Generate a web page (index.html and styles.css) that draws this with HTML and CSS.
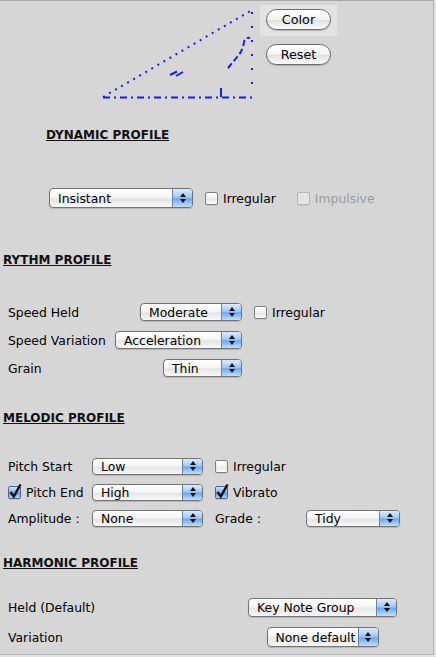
FILE: index.html
```html
<!DOCTYPE html>
<html>
<head>
<meta charset="utf-8">
<link rel="stylesheet" href="styles.css">
</head>
<body>
<div class="panel">
  <div class="top">
    <svg class="sketch" width="260" height="127" viewBox="0 1 260 127">
      <g fill="none" stroke="#1c1cf2" stroke-width="2">
        <line x1="103" y1="97" x2="252" y2="10" stroke-dasharray="2 5"/>
        <line x1="252" y1="12" x2="252" y2="96" stroke-dasharray="2 12"/>
        <line x1="103" y1="97.5" x2="252" y2="97.5" stroke-dasharray="7 4 2 4"/>
        <line x1="221" y1="88" x2="221" y2="97"/>
        <path d="M228 68 L238 56 Q243 50 244 42 Q245 37 250 38" stroke-dasharray="6 3"/>
        <line x1="170" y1="75" x2="177" y2="71.5"/>
        <line x1="176" y1="76" x2="183" y2="72"/>
      </g>
    </svg>
    <div class="btns">
      <div class="btn-hl"><span class="btn">Color</span></div>
      <span class="btn reset">Reset</span>
    </div>
  </div>

  <h2 class="hdr hdr-dyn">DYNAMIC PROFILE</h2>
  <div class="dyn-row">
    <span class="pop w144 h20"><span class="val">Insistant</span><span class="arr"></span></span>
    <label class="chk chk-a"><span class="cb"></span>Irregular</label>
    <label class="chk chk-b dis"><span class="cb"></span>Impulsive</label>
  </div>

  <h2 class="hdr">RYTHM PROFILE</h2>
  <div class="rrows">
    <div class="rrow">
      <div class="rfield"><span>Speed Held</span><span class="pop w102 h18"><span class="val">Moderate</span><span class="arr"></span></span></div>
      <label class="chk chk-r"><span class="cb"></span>Irregular</label>
    </div>
    <div class="rrow">
      <div class="rfield"><span>Speed Variation</span><span class="pop w127 h18"><span class="val">Acceleration</span><span class="arr"></span></span></div>
    </div>
    <div class="rrow">
      <div class="rfield"><span>Grain</span><span class="pop w79 h18"><span class="val">Thin</span><span class="arr"></span></span></div>
    </div>
  </div>

  <h2 class="hdr hdr-mel">MELODIC PROFILE</h2>
  <div class="mgrid">
    <span>Pitch Start</span>
    <span class="pop w111 h17"><span class="val">Low</span><span class="arr"></span></span>
    <label class="chk"><span class="cb"></span>Irregular</label>
    <span></span>

    <label class="chk"><span class="cb on"><svg viewBox="0 0 14 15" width="14" height="15"><path d="M2.5 8 L5.8 12.5 L12.5 0.5" fill="none" stroke="#111" stroke-width="2.4"/></svg></span>Pitch End</label>
    <span class="pop w111 h17"><span class="val">High</span><span class="arr"></span></span>
    <label class="chk"><span class="cb on"><svg viewBox="0 0 14 15" width="14" height="15"><path d="M2.5 8 L5.8 12.5 L12.5 0.5" fill="none" stroke="#111" stroke-width="2.4"/></svg></span>Vibrato</label>
    <span></span>

    <span>Amplitude :</span>
    <span class="pop w111 h17"><span class="val">None</span><span class="arr"></span></span>
    <span>Grade :</span>
    <span class="pop w94 h17"><span class="val">Tidy</span><span class="arr"></span></span>
  </div>

  <h2 class="hdr hdr-har">HARMONIC PROFILE</h2>
  <div class="hgrid">
    <span>Held (Default)</span>
    <span class="pop w149 h19"><span class="val">Key Note Group</span><span class="arr"></span></span>
    <span>Variation</span>
    <span class="pop w112 h20"><span class="val">None default</span><span class="arr"></span></span>
  </div>
</div>
</body>
</html>
```
FILE: styles.css
```css
html, body {
  margin: 0;
  padding: 0;
}
body {
  background: #e2e2e2;
  font-family: "DejaVu Sans", "Liberation Sans", sans-serif;
  font-size: 12.4px;
  color: #000;
  width: 436px;
  height: 657px;
  overflow: hidden;
}
.panel {
  width: 433px;
  height: 653px;
  background: #d6d6d6;
  border-top: 1px solid #a9a9a9;
  border-right: 1px solid #b3b3b3;
  border-bottom: 1px solid #b3b3b3;
}
.top {
  display: flex;
  height: 127px;
}
.sketch {
  display: block;
  flex: none;
}
.btns {
  display: flex;
  flex-direction: column;
  align-items: flex-start;
  padding-top: 4px;
}
.btn-hl {
  width: 71px;
  height: 27px;
  padding: 4px 0 0 6px;
  background: #e3e3e3;
}
.btn {
  display: flex;
  align-items: center;
  justify-content: center;
  box-sizing: border-box;
  width: 65px;
  height: 21px;
  border: 1px solid #6a6a6a;
  border-radius: 11px;
  background: linear-gradient(#ffffff, #f6f6f6 45%, #e2e2e2 55%, #fbfbfb);
  box-shadow: 0 1px 1px rgba(0, 0, 0, 0.2);
  font-size: 12.8px;
}
.reset {
  margin: 8px 0 0 6px;
}
.hdr {
  margin: 0;
  padding-left: 3px;
  font-size: 12px;
  line-height: 14px;
  font-weight: bold;
  text-decoration: underline;
  color: #111;
}
.hdr-dyn {
  padding-left: 46px;
}
.dyn-row {
  display: flex;
  align-items: center;
  height: 20px;
  margin: 46px 0 45px;
  padding-left: 49px;
}
.chk {
  display: flex;
  align-items: center;
  gap: 5px;
}
.chk-a {
  margin-left: 12px;
}
.chk-b {
  margin-left: 21px;
}
.chk-r {
  margin-left: 12px;
}
.dis {
  color: #9b9b9b;
}
.cb {
  position: relative;
  box-sizing: border-box;
  width: 13px;
  height: 13px;
  flex: none;
  border: 1px solid #7f7f7f;
  border-radius: 2px;
  background: linear-gradient(#ffffff, #f0f0f0 50%, #e6e6e6 55%, #fafafa);
  box-shadow: 0 1px 0 rgba(0, 0, 0, 0.08);
}
.dis .cb {
  border-color: #b5b5b5;
  background: #e4e4e4;
}
.cb.on {
  border-color: #4d6593;
  background: linear-gradient(#d4e4fa, #8ab8f0 45%, #5f9ce8 55%, #b4d8fb);
}
.cb svg {
  position: absolute;
  left: -1px;
  top: -3px;
}
.pop {
  display: inline-flex;
  box-sizing: border-box;
  border: 1px solid #737373;
  border-radius: 4px;
  background: linear-gradient(#ffffff, #f6f6f6 45%, #e5e5e5 55%, #f8f8f8);
  box-shadow: 0 1px 1px rgba(0, 0, 0, 0.15);
  overflow: hidden;
}
.pop .val {
  flex: 1;
  display: flex;
  align-items: center;
  padding-left: 8px;
  white-space: nowrap;
  overflow: hidden;
}
.pop .arr {
  width: 19px;
  flex: none;
  display: flex;
  flex-direction: column;
  align-items: center;
  justify-content: center;
  gap: 2px;
  border-left: 1px solid #6a82ae;
  background: linear-gradient(#dcebfc, #a3c8f4 45%, #6fa8ee 55%, #bfe0fd);
}
.pop .arr::before {
  content: "";
  border-left: 3.5px solid transparent;
  border-right: 3.5px solid transparent;
  border-bottom: 4px solid #111;
}
.pop .arr::after {
  content: "";
  border-left: 3.5px solid transparent;
  border-right: 3.5px solid transparent;
  border-top: 4px solid #111;
}
.w144 { width: 144px; }
.w102 { width: 102px; }
.w127 { width: 127px; }
.w79 { width: 79px; }
.w111 { width: 111px; }
.w94 { width: 94px; }
.w149 { width: 149px; }
.w112 { width: 112px; }
.h20 { height: 20px; }
.h19 { height: 19px; }
.h18 { height: 18px; }
.h17 { height: 17px; }
.rrows {
  margin-top: 31px;
}
.rrow {
  display: flex;
  align-items: center;
  height: 28px;
  padding-left: 8px;
}
.rfield {
  width: 234px;
  display: flex;
  align-items: center;
  justify-content: space-between;
}
.hdr-mel {
  margin-top: 29px;
}
.mgrid {
  display: grid;
  grid-template-columns: 84px 123px 91px 94px;
  grid-auto-rows: 26px;
  align-items: center;
  padding-left: 8px;
  margin-top: 28px;
}
.hdr-har {
  margin-top: 25px;
}
.hgrid {
  display: grid;
  grid-template-columns: 240px 149px;
  grid-auto-rows: 30px;
  align-items: center;
  padding-left: 8px;
  margin-top: 22px;
}
.hgrid .pop {
  justify-self: center;
}
```
